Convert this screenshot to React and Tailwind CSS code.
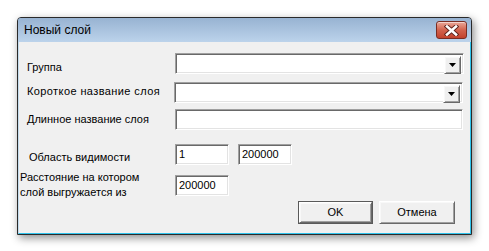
import React from "react";

// Classic Win32 sunken edge (edit / combo boxes)
const sunken =
  "border border-t-[#a0a0a0] border-l-[#a0a0a0] border-b-white border-r-white shadow-[inset_1px_1px_0_#696969,inset_-1px_-1px_0_#e3e3e3] bg-white";

// Classic raised edge (push buttons)
const raised =
  "border border-t-white border-l-white border-b-[#696969] border-r-[#696969] shadow-[inset_1px_1px_0_#f8f8f8,inset_-1px_-1px_0_#a0a0a0] bg-[#f0f0f0]";

function DropButton() {
  return (
    <div className={`w-[17px] h-[18px] ml-auto flex items-center justify-center ${raised}`}>
      <svg width="7" height="4" viewBox="0 0 7 4">
        <path d="M0 0 H7 L3.5 4 Z" fill="#000" />
      </svg>
    </div>
  );
}

function Combo({ className = "" }) {
  return (
    <div className={`h-[21px] w-[289px] p-[2px] flex ${sunken} ${className}`}>
      <DropButton />
    </div>
  );
}

function Edit({ value, className = "" }) {
  return (
    <div className={`h-[21px] px-[3px] flex items-center text-[11px] text-black ${sunken} ${className}`}>
      {value}
    </div>
  );
}

function CloseButton() {
  return (
    <div className="w-[31px] h-[18px] rounded-[3px] border border-[#7a2d23] bg-gradient-to-b from-[#e9a899] via-[#d2624d] to-[#c2422c] shadow-[inset_0_1px_0_rgba(255,255,255,0.5)] flex items-center justify-center">
      <svg width="15" height="11" viewBox="0 0 15 11">
        <path d="M3 1.5 L12 9.5 M12 1.5 L3 9.5" stroke="#5a2019" strokeWidth="4.4" strokeLinecap="square" />
        <path d="M3 1.5 L12 9.5 M12 1.5 L3 9.5" stroke="#ffffff" strokeWidth="2.6" strokeLinecap="square" />
      </svg>
    </div>
  );
}

export default function App() {
  return (
    <div className="w-[489px] h-[251px] bg-white pl-[17px] pt-[17px] font-['Liberation_Sans',Arial,sans-serif]">
      {/* Window frame */}
      <div className="w-[455px] h-[218px] flex flex-col border border-[#2a2a2a] rounded-t-[4px] bg-[#a9c3df] shadow-[2px_3px_9px_rgba(0,0,0,0.45)]">
        {/* Title bar */}
        <div className="h-[24px] flex items-center pl-[6px] pr-[4px] rounded-t-[3px] bg-gradient-to-b from-[#98b3d2] to-[#bcd3eb]">
          <span className="text-[12px] text-black">Новый слой</span>
          <div className="ml-auto self-start mt-[3px]">
            <CloseButton />
          </div>
        </div>

        {/* Client area */}
        <div className="flex-1 flex flex-col bg-[#f0f0f0] border-l border-r border-b border-l-[#c4dced] border-r-[#2ec3ec] border-b-[#2ec3ec] text-[11px] text-black">
          {/* Группа */}
          <div className="flex h-[21px] mt-[11px]">
            <div className="w-[156px] pl-[8px] pt-[4px] leading-[20px]">Группа</div>
            <Combo />
          </div>

          {/* Короткое название */}
          <div className="flex h-[21px] mt-[8px]">
            <div className="w-[155px] pl-[8px] leading-[19px] tracking-[0.4px]">Короткое название слоя</div>
            <Combo className="h-[20px]" />
          </div>

          {/* Длинное название */}
          <div className="flex h-[21px] mt-[6px]">
            <div className="w-[156px] pl-[8px] leading-[21px]">Длинное название слоя</div>
            <Edit className="w-[288px]" />
          </div>

          {/* Область видимости */}
          <div className="flex h-[21px] mt-[14px]">
            <div className="w-[156px] pl-[10px] pt-[3px] leading-[20px]">Область видимости</div>
            <Edit value="1" className="w-[54px]" />
            <Edit value="200000" className="w-[54px] ml-[9px]" />
          </div>

          {/* Расстояние */}
          <div className="flex h-[30px] mt-[5px]">
            <div className="w-[156px] pl-[1px] leading-[15px]">
              Расстояние на котором
              <br />
              слой выгружается из
            </div>
            <Edit value="200000" className="w-[54px] mt-[5px]" />
          </div>

          {/* Buttons */}
          <div className="flex justify-end gap-[6px] mt-[1px] pr-[15px]">
            <div className="w-[75px] h-[23px] border border-[#5a5a5a]">
              <div className={`w-full h-full flex items-center justify-center ${raised}`}>OK</div>
            </div>
            <div className={`w-[76px] h-[23px] flex items-center justify-center ${raised}`}>Отмена</div>
          </div>
        </div>
      </div>
    </div>
  );
}
